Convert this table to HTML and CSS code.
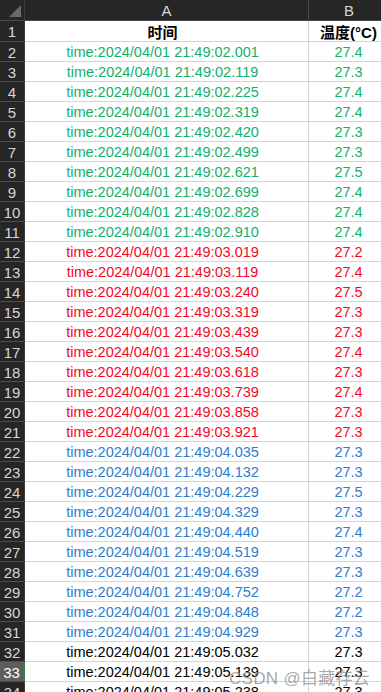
FILE: index.html
```html
<!DOCTYPE html>
<html>
<head>
<meta charset="utf-8">
<link rel="stylesheet" href="styles.css">
</head>
<body>
<div class="sheet">
  <div class="grid">
    <div class="corner"><span class="tri"></span></div>
    <div class="colhead">A</div>
    <div class="colhead last">B</div>

    <div class="rh r1">1</div><div class="c a hd r1">时间</div><div class="c b hd r1">温度(°C)</div>

    <div class="rh">2</div><div class="c a g">time:2024/04/01 21:49:02.001</div><div class="c b g">27.4</div>
    <div class="rh">3</div><div class="c a g">time:2024/04/01 21:49:02.119</div><div class="c b g">27.3</div>
    <div class="rh">4</div><div class="c a g">time:2024/04/01 21:49:02.225</div><div class="c b g">27.4</div>
    <div class="rh">5</div><div class="c a g">time:2024/04/01 21:49:02.319</div><div class="c b g">27.4</div>
    <div class="rh">6</div><div class="c a g">time:2024/04/01 21:49:02.420</div><div class="c b g">27.3</div>
    <div class="rh">7</div><div class="c a g">time:2024/04/01 21:49:02.499</div><div class="c b g">27.3</div>
    <div class="rh">8</div><div class="c a g">time:2024/04/01 21:49:02.621</div><div class="c b g">27.5</div>
    <div class="rh">9</div><div class="c a g">time:2024/04/01 21:49:02.699</div><div class="c b g">27.4</div>
    <div class="rh">10</div><div class="c a g">time:2024/04/01 21:49:02.828</div><div class="c b g">27.4</div>
    <div class="rh">11</div><div class="c a g">time:2024/04/01 21:49:02.910</div><div class="c b g">27.4</div>

    <div class="rh">12</div><div class="c a r">time:2024/04/01 21:49:03.019</div><div class="c b r">27.2</div>
    <div class="rh">13</div><div class="c a r">time:2024/04/01 21:49:03.119</div><div class="c b r">27.4</div>
    <div class="rh">14</div><div class="c a r">time:2024/04/01 21:49:03.240</div><div class="c b r">27.5</div>
    <div class="rh">15</div><div class="c a r">time:2024/04/01 21:49:03.319</div><div class="c b r">27.3</div>
    <div class="rh">16</div><div class="c a r">time:2024/04/01 21:49:03.439</div><div class="c b r">27.3</div>
    <div class="rh">17</div><div class="c a r">time:2024/04/01 21:49:03.540</div><div class="c b r">27.4</div>
    <div class="rh">18</div><div class="c a r">time:2024/04/01 21:49:03.618</div><div class="c b r">27.3</div>
    <div class="rh">19</div><div class="c a r">time:2024/04/01 21:49:03.739</div><div class="c b r">27.4</div>
    <div class="rh">20</div><div class="c a r">time:2024/04/01 21:49:03.858</div><div class="c b r">27.3</div>
    <div class="rh">21</div><div class="c a r">time:2024/04/01 21:49:03.921</div><div class="c b r">27.3</div>

    <div class="rh">22</div><div class="c a bl">time:2024/04/01 21:49:04.035</div><div class="c b bl">27.3</div>
    <div class="rh">23</div><div class="c a bl">time:2024/04/01 21:49:04.132</div><div class="c b bl">27.3</div>
    <div class="rh">24</div><div class="c a bl">time:2024/04/01 21:49:04.229</div><div class="c b bl">27.5</div>
    <div class="rh">25</div><div class="c a bl">time:2024/04/01 21:49:04.329</div><div class="c b bl">27.3</div>
    <div class="rh">26</div><div class="c a bl">time:2024/04/01 21:49:04.440</div><div class="c b bl">27.4</div>
    <div class="rh">27</div><div class="c a bl">time:2024/04/01 21:49:04.519</div><div class="c b bl">27.3</div>
    <div class="rh">28</div><div class="c a bl">time:2024/04/01 21:49:04.639</div><div class="c b bl">27.3</div>
    <div class="rh">29</div><div class="c a bl">time:2024/04/01 21:49:04.752</div><div class="c b bl">27.2</div>
    <div class="rh">30</div><div class="c a bl">time:2024/04/01 21:49:04.848</div><div class="c b bl">27.2</div>
    <div class="rh">31</div><div class="c a bl">time:2024/04/01 21:49:04.929</div><div class="c b bl">27.3</div>

    <div class="rh">32</div><div class="c a k">time:2024/04/01 21:49:05.032</div><div class="c b k">27.3</div>
    <div class="rh sel">33</div><div class="c a k">time:2024/04/01 21:49:05.139</div><div class="c b k">27.3</div>
    <div class="rh">34</div><div class="c a k">time:2024/04/01 21:49:05.238</div><div class="c b k">27.3</div>
  </div>
  <div class="watermark">CSDN @白藏存云</div>
</div>
</body>
</html>
```
FILE: styles.css
```css
html, body {
  margin: 0;
  padding: 0;
  background: #ffffff;
  overflow: hidden;
}
.sheet {
  position: relative;
  width: 381px;
  height: 692px;
  overflow: hidden;
  font-family: "Liberation Sans", "Noto Sans CJK SC", sans-serif;
}
.grid {
  display: grid;
  grid-template-columns: 25px 284px 80px;
  grid-template-rows: 21px 21px;
  grid-auto-rows: 20px;
}
.corner {
  position: relative;
  background: #262626;
  border-right: 1px solid #3d3d3d;
  border-bottom: 1px solid #4a4a4a;
  box-sizing: border-box;
}
.tri {
  position: absolute;
  right: 3px;
  bottom: 3px;
  width: 0;
  height: 0;
  border-left: 12px solid transparent;
  border-bottom: 12px solid #6a6a6a;
}
.colhead {
  background: #262626;
  color: #d6d6d6;
  font-size: 15px;
  display: flex;
  align-items: flex-end;
  justify-content: center;
  padding-bottom: 1px;
  border-right: 1px solid #4a4a4a;
  border-bottom: 1px solid #4a4a4a;
  box-sizing: border-box;
}
.colhead.last {
  border-right: none;
}
.rh {
  background: #262626;
  color: #d6d6d6;
  font-size: 15px;
  display: flex;
  align-items: center;
  justify-content: center;
  border-bottom: 1px solid #4f4f4f;
  border-right: 1px solid #3d3d3d;
  box-sizing: border-box;
  padding-top: 1px;
}
.rh.sel {
  background: #5e5e5e;
  color: #ffffff;
  border-right: 2px solid #1f8a4c;
}
.c {
  display: flex;
  align-items: center;
  justify-content: center;
  font-size: 14.5px;
  border-bottom: 1px solid #d4d4d4;
  border-right: 1px solid #d4d4d4;
  box-sizing: border-box;
  white-space: nowrap;
  padding-top: 1px;
}
.c.a {
  padding-right: 8px;
}
.c.hd {
  font-weight: bold;
  color: #000000;
  font-size: 15px;
}
.g { color: #12b06a; }
.r { color: #f2091f; }
.bl { color: #2f7dcc; }
.k { color: #000000; }
.watermark {
  position: absolute;
  left: 229px;
  top: 664px;
  font-size: 17px;
  color: rgba(140, 140, 140, 0.75);
  white-space: nowrap;
  letter-spacing: 0.3px;
}
```
